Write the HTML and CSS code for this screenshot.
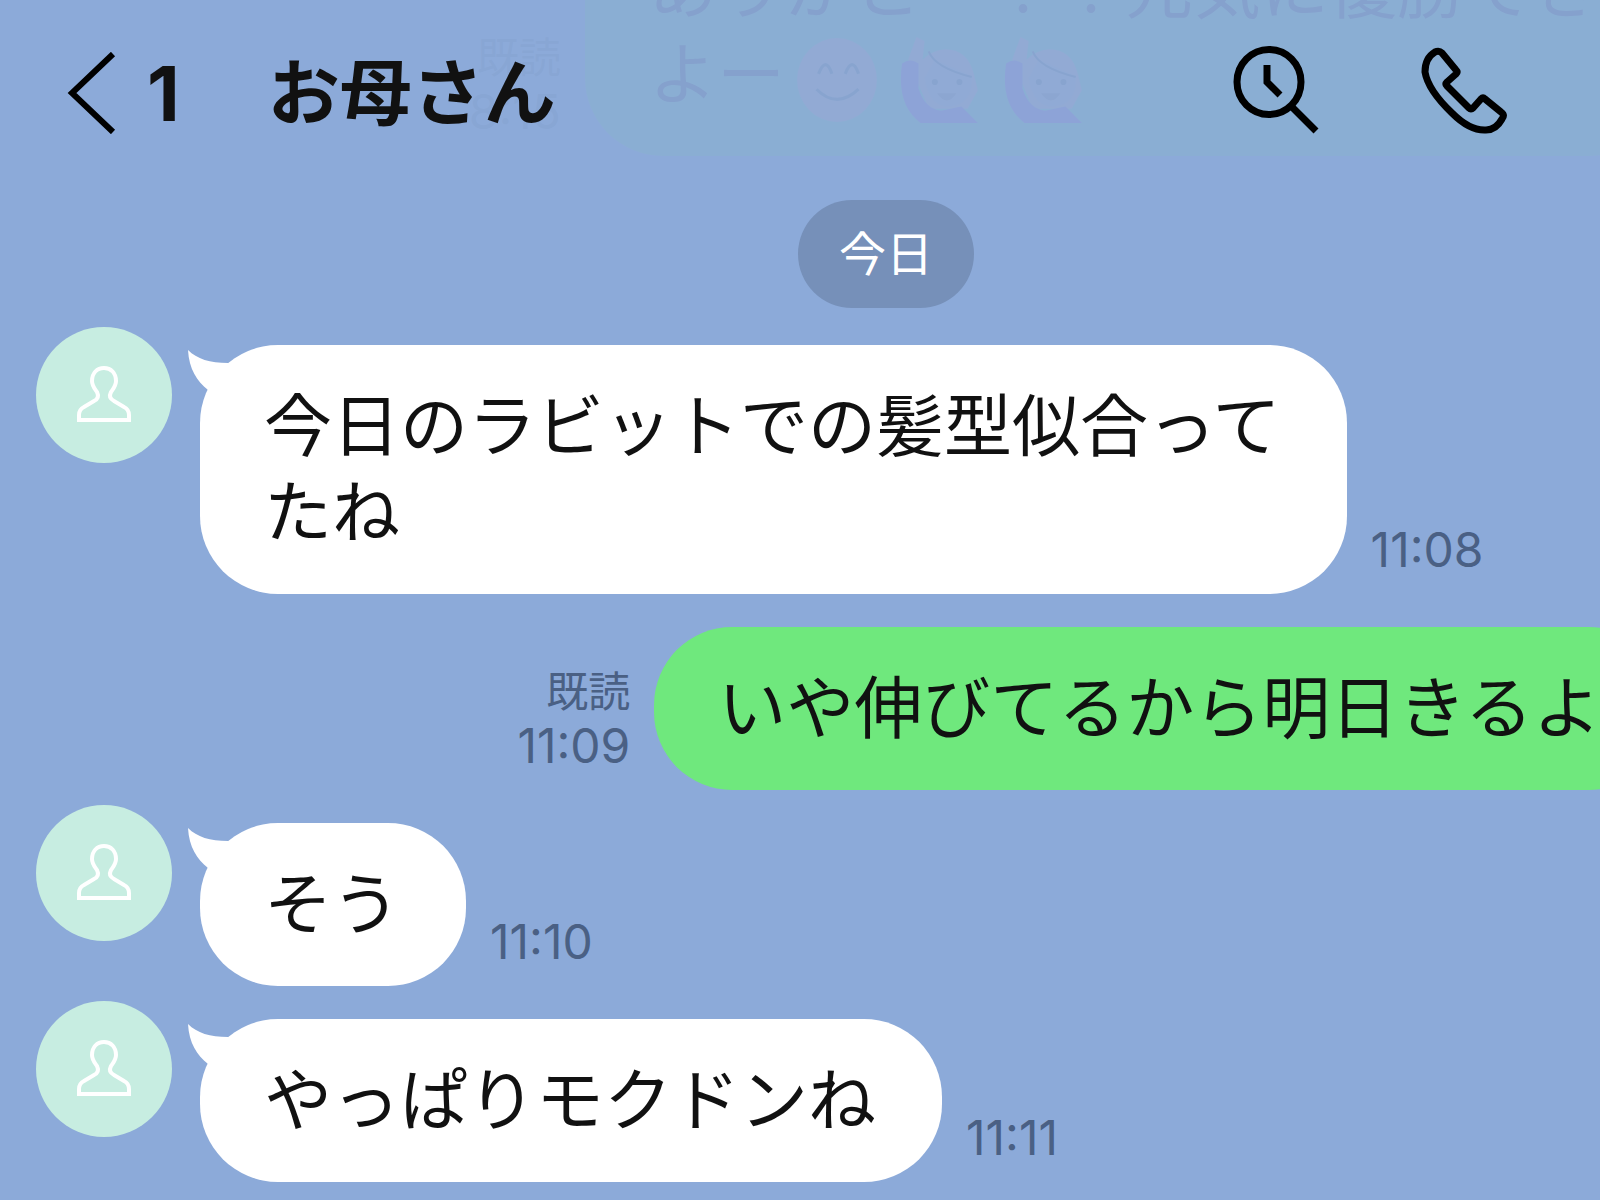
FILE: index.html
```html
<!DOCTYPE html>
<html lang="ja">
  <head>
    <meta charset="utf-8">
    <title>お母さん</title>
    <link rel="stylesheet" href="styles.css">
  </head>

  <body>
    <!-- shared shapes -->
    <svg class="defs" aria-hidden="true">
      <symbol id="person" viewBox="0 0 136 136">
        <path d="M68 41c-7 0-12 5-12 13 0 5 3 8 5 11 2 4 1 7-3 9l-10 6c-4 2-5 4-5 8v5h50v-5c0-4-1-6-5-8l-10-6c-4-2-5-5-3-9 2-3 5-6 5-11 0-8-5-13-12-13z" fill="none" stroke="#fff" stroke-width="4"/>
      </symbol>
      <symbol id="tail" viewBox="0 0 60 60">
        <path d="M0 0c9 9 22 13 40 13l12 10-18 32-14-15C9 31 1 19 0 0z" fill="#fff"/>
      </symbol>
      <symbol id="smile" viewBox="0 0 80 84">
        <ellipse cx="40" cy="42" rx="39" ry="41" fill="#ff9c88"/>
        <path d="M22 36q7-18 13 0M48 36q7-18 13 0M20 51q20 20 41 0" fill="none" stroke="#402030" stroke-width="3"/>
      </symbol>
      <symbol id="hand" viewBox="0 0 80 84">
        <path d="M8 22L16 0l8 4-2 18q9-9 22-10 22 0 28 24l4 16-10 18H28z" fill="#ff9c88"/>
        <path d="M2 26q8-6 16 0v24q6 20 22 22l20-4 16 16H20Q-4 66 2 26z" fill="#a010d0"/>
        <path d="M24 40l10-18 36 16q2 28-22 30-20 0-24-28z" fill="#e8a09a"/>
        <path d="M28 14q6 16 42 25" fill="none" stroke="#402030" stroke-width="2"/>
        <circle cx="34" cy="44" r="3" fill="#402030"/>
        <circle cx="58" cy="44" r="3" fill="#402030"/>
        <path d="M36 55q10 14 19 0z" fill="#904050"/>
      </symbol>
    </svg>

    <header class="header">
      <button class="iconButton back" aria-label="戻る">
        <svg width="50" height="82" viewBox="0 0 50 82"><path d="M46 2L5 41l41 39" fill="none" stroke="#000" stroke-width="6"/></svg>
        <span class="unread">1</span>
      </button>
      <h1 class="title">お母さん</h1>
      <div class="actions">
        <button class="iconButton" aria-label="検索">
          <svg width="88" height="96" viewBox="0 0 88 96">
            <g fill="none" stroke="#000" stroke-width="7">
              <ellipse cx="37" cy="37" rx="32" ry="32.5"/>
              <path d="M59 61l25 25M35 20v17l13 13"/>
            </g>
          </svg>
        </button>
        <button class="iconButton" aria-label="通話">
          <svg width="88" height="96" viewBox="0 0 88 96">
            <path d="M22 8l14 17q2 2 0 4l-9 8q-2 2 0 4l22 22q2 2 4 0l8-9q2-2 4 0l16 13q4 3 1 7-6 11-16 11-16 1-34-17Q8 45 5 27 5 13 15 7q4-2 7 1z" fill="none" stroke="#000" stroke-width="7" stroke-linejoin="round"/>
          </svg>
        </button>
      </div>
    </header>

    <main class="chat">
      <div class="row sent">
        <div class="meta"><span class="read">既読</span><time>8:15</time></div>
        <p class="bubble">ありがとー！！元気に優勝でき<br>よー<svg class="emoji"><use href="#smile"/></svg><svg class="emoji"><use href="#hand"/></svg><svg class="emoji"><use href="#hand"/></svg></p>
      </div>

      <div class="date">今日</div>

      <div class="row">
        <div class="avatar"><svg><use href="#person"/></svg></div>
        <p class="bubble"><svg class="tail"><use href="#tail"/></svg>今日のラビットでの髪型似合って<br>たね</p>
        <div class="meta"><time>11:08</time></div>
      </div>

      <div class="row sent">
        <div class="meta"><span class="read">既読</span><time>11:09</time></div>
        <p class="bubble">いや伸びてるから明日きるよ</p>
      </div>

      <div class="row">
        <div class="avatar"><svg><use href="#person"/></svg></div>
        <p class="bubble"><svg class="tail"><use href="#tail"/></svg>そう</p>
        <div class="meta"><time>11:10</time></div>
      </div>

      <div class="row">
        <div class="avatar"><svg><use href="#person"/></svg></div>
        <p class="bubble"><svg class="tail"><use href="#tail"/></svg>やっぱりモクドンね</p>
        <div class="meta"><time>11:11</time></div>
      </div>
    </main>
  </body>
</html>
```

FILE: styles.css
```css
body {
  margin: 0;
  min-height: 100vh;
  overflow: hidden;
  background-color: #8caad9;
  color: #111;
  font-family: Inter, "Noto Sans CJK JP", sans-serif;
}

.defs {
  position: absolute;
  width: 0;
  height: 0;
}

/* header floats over the scrolled messages */
.header {
  position: absolute;
  top: 0;
  left: 0;
  right: 0;
  z-index: 1;
  display: flex;
  align-items: center;
  gap: 88px;
  box-sizing: border-box;
  height: 186px;
  padding: 0 92px 0 67px;
  background-color: rgba(140, 170, 217, 0.94);
}

.iconButton {
  display: flex;
  align-items: center;
  padding: 0;
  border: 0;
  background: none;
  color: #111;
  font-family: inherit;
}

.back {
  gap: 30px;
}

.unread {
  font-size: 76px;
  font-weight: 700;
  line-height: 86px;
}

.title {
  flex: 1;
  margin: 0;
  font-size: 72px;
  font-weight: 700;
  line-height: 86px;
}

.actions {
  display: flex;
  gap: 100px;
}

/* the conversation runs wider than the window */
.chat {
  display: flex;
  flex-direction: column;
  gap: 15px;
  margin: -111px -172px 0 0;
  padding-left: 36px;
}

.row {
  display: flex;
  align-items: flex-start;
}

.sent {
  justify-content: flex-end;
  padding-right: 105px;
}

.avatar {
  width: 136px;
  height: 136px;
  margin-right: 28px;
  border-radius: 50%;
  background-color: #c7ede1;
}

.avatar svg {
  display: block;
  width: 136px;
  height: 136px;
}

.bubble {
  position: relative;
  margin: 18px 0 0;
  padding: 38px 66px 39px 64px;
  border-radius: 78px;
  background-color: #fff;
  font-size: 68px;
  line-height: 86px;
  white-space: nowrap;
}

.sent .bubble {
  background-color: #6fe87d;
}

.tail {
  position: absolute;
  top: 5px;
  left: -12px;
  width: 60px;
  height: 60px;
}

.emoji {
  width: 84px;
  height: 86px;
  margin: -10px 10px;
  vertical-align: middle;
  opacity: 0.8;
}

.meta {
  display: flex;
  flex-direction: column;
  align-self: flex-end;
  padding: 0 24px 17px;
  color: #4a6084;
  font-size: 48px;
  line-height: 54px;
  text-align: right;
}

.read {
  font-size: 42px;
}

.date {
  align-self: center;
  margin: 29px 36px 4px 0;
  padding: 0 41px;
  border-radius: 54px;
  background-color: #7690b9;
  color: #fff;
  font-size: 47px;
  line-height: 108px;
}
```
